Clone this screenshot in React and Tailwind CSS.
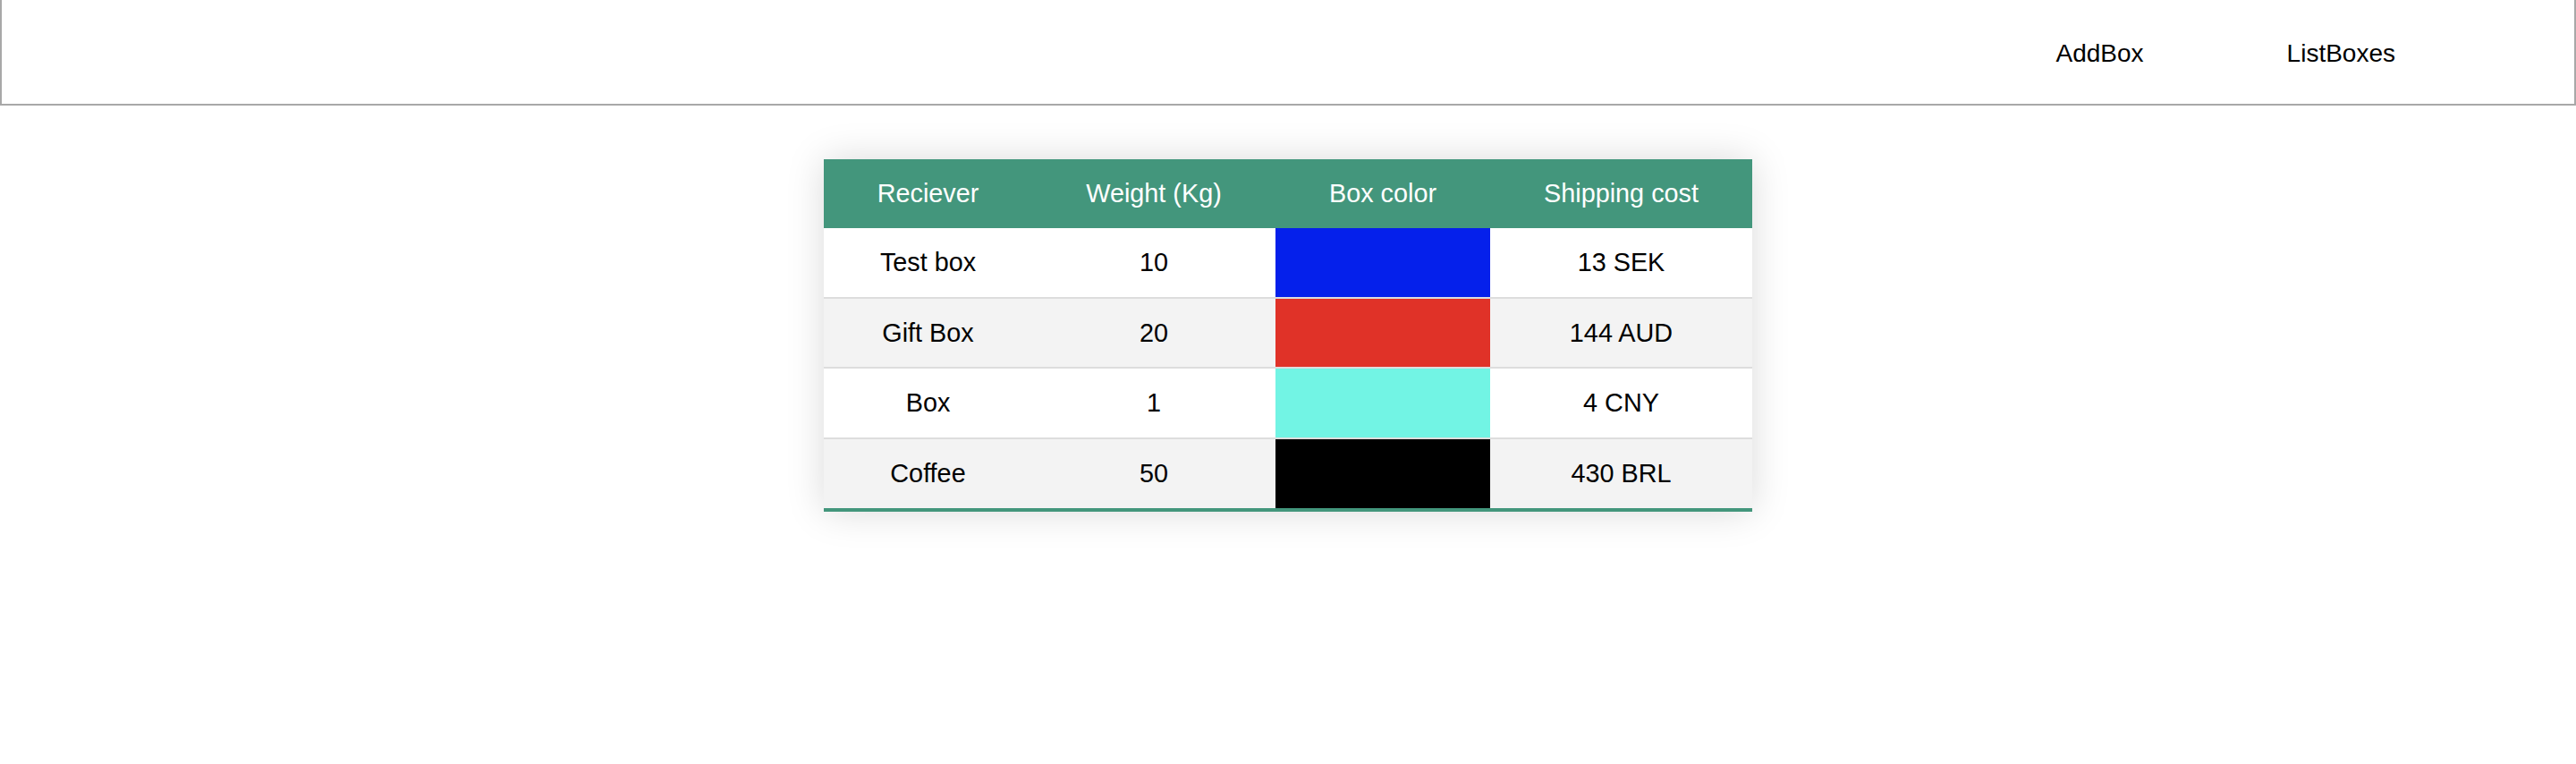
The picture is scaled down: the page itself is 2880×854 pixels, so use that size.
import React from "react";

const rows = [
  { name: "Test box", weight: "10", color: "#0520eb", cost: "13 SEK" },
  { name: "Gift Box", weight: "20", color: "#e03228", cost: "144 AUD" },
  { name: "Box", weight: "1", color: "#72f4e4", cost: "4 CNY" },
  { name: "Coffee", weight: "50", color: "#000000", cost: "430 BRL" },
];

export default function App() {
  return (
    <div className="min-h-[854px] bg-white text-black font-['Liberation_Sans',Arial,sans-serif]">
      <header className="flex h-[118px] items-center justify-end gap-[160px] border-x-2 border-b-2 border-[#a8a8a8] pr-[200px] pt-[3px] text-[28px] leading-none">
        <a className="cursor-pointer">AddBox</a>
        <a className="cursor-pointer">ListBoxes</a>
      </header>
      <main className="flex justify-center pt-[60px]">
        <table className="w-[1038px] table-fixed border-collapse text-[28.8px] leading-none shadow-[0_0_40px_rgba(0,0,0,0.15)]">
          <colgroup>
            <col className="w-[233px]" />
            <col className="w-[272px]" />
            <col className="w-[240px]" />
            <col className="w-[293px]" />
          </colgroup>
          <thead>
            <tr className="bg-[#43967c] text-white">
              <th className="px-[30px] py-[24px] text-center font-normal">Reciever</th>
              <th className="px-[30px] py-[24px] text-center font-normal">Weight (Kg)</th>
              <th className="px-[30px] py-[24px] text-center font-normal">Box color</th>
              <th className="px-[30px] py-[24px] text-center font-normal">Shipping cost</th>
            </tr>
          </thead>
          <tbody>
            {rows.map((r, i) => (
              <tr
                key={r.name}
                className={
                  (i % 2 === 1 ? "bg-[#f3f3f3] " : "bg-white ") +
                  (i === rows.length - 1
                    ? "border-b-4 border-[#43967c]"
                    : "border-b-2 border-[#dddddd]")
                }
              >
                <td className="px-[30px] py-[24px] text-center">{r.name}</td>
                <td className="px-[30px] py-[24px] text-center">{r.weight}</td>
                <td className="px-[30px] py-[24px]" style={{ backgroundColor: r.color }}></td>
                <td className="px-[30px] py-[24px] text-center">{r.cost}</td>
              </tr>
            ))}
          </tbody>
        </table>
      </main>
    </div>
  );
}
